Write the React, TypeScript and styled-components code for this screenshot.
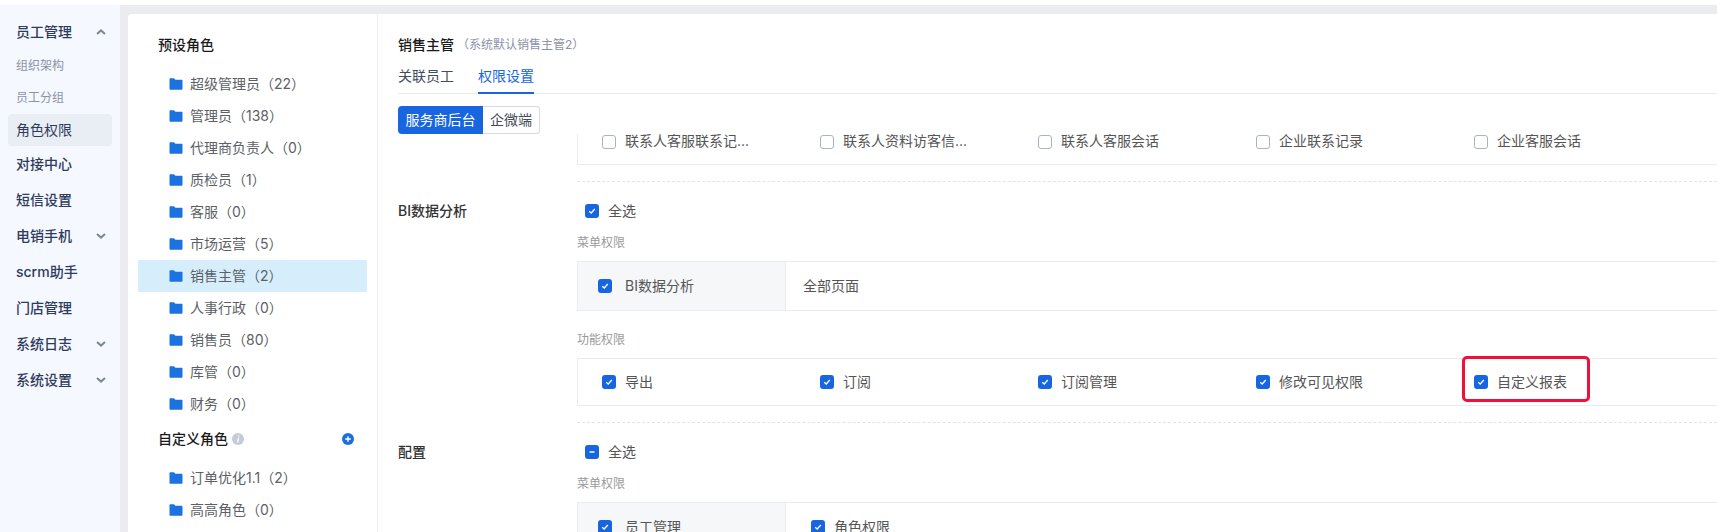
import React from 'react';
import styled, { createGlobalStyle } from 'styled-components';

const Global = createGlobalStyle`
  html, body { margin: 0; padding: 0; background: #fff; }
  body { font-family: Inter, "Noto Sans CJK SC", sans-serif; overflow: hidden; }
  * { box-sizing: border-box; }
`;

const Page = styled.div`
  height: 532px;
  width: 1717px;
  overflow: hidden;
  padding-top: 5px;
  background: #fff;
`;
const Shell = styled.div`
  display: flex;
  height: 527px;
  background: #ebecf0;
`;
const Label = styled.span`
  display: block;
  line-height: 20px;
  padding-bottom: 1px;
  white-space: nowrap;
`;
const Sidebar = styled.nav`
  width: 120px;
  flex: none;
  padding-top: 9px;
  background: #f5f8fe;
`;
const NavItem = styled.div<{ $active?: boolean }>`
  display: flex;
  align-items: center;
  justify-content: space-between;
  height: ${p => (p.$active ? '32px' : '36px')};
  margin: 0 8px;
  padding: 0 6px 0 8px;
  border-radius: 4px;
  font-size: 14px;
  font-weight: ${p => (p.$active ? 400 : 500)};
  color: #2f3b5c;
  background: ${p => (p.$active ? '#e9edf4' : 'transparent')};
`;
const SubItem = styled.div`
  height: 32px;
  margin: 0 8px;
  padding-left: 8px;
  display: flex;
  align-items: center;
  font-size: 12px;
  color: #8a93a8;
`;
const Card = styled.main`
  flex: 1;
  min-width: 0;
  display: flex;
  margin: 9px 0 0 8px;
  background: #fff;
  border-top-left-radius: 4px;
`;
const RolePanel = styled.aside`
  width: 250px;
  flex: none;
  padding: 21px 10px 0;
  border-right: 1px solid #eeeff2;
`;
const PanelTitle = styled.div`
  display: flex;
  align-items: center;
  height: 20px;
  padding-left: 20px;
  font-size: 14px;
  font-weight: 500;
  color: #1a1a1a;
`;
const CustomTitle = styled(PanelTitle)`
  margin-top: 9px;
  padding-right: 13px;
  > svg:first-of-type { margin-left: 4px; }
  > svg:last-of-type { margin-left: auto; }
`;
const RoleList = styled.div`
  margin-top: 13px;
`;
const RoleRow = styled.div<{ $selected?: boolean }>`
  display: flex;
  align-items: center;
  gap: 7px;
  height: 32px;
  padding-left: 31px;
  font-size: 14px;
  color: #5c5f66;
  background: ${p => (p.$selected ? '#d6eefc' : 'transparent')};
`;
const Detail = styled.section`
  flex: 1;
  min-width: 0;
  padding: 21px 0 0 20px;
`;
const Heading = styled.div`
  display: flex;
  align-items: center;
  gap: 3px;
  height: 20px;
  font-size: 14px;
  font-weight: 500;
  color: #1a1a1a;
`;
const HeadingNote = styled(Label)`
  font-size: 12px;
  font-weight: 400;
  color: #8a93a8;
`;
const Tabs = styled.div`
  display: flex;
  gap: 24px;
  margin-top: 5px;
  height: 34px;
  border-bottom: 1px solid #ebecf0;
`;
const Tab = styled.div<{ $active?: boolean }>`
  height: 34px;
  padding-top: 6px;
  line-height: 20px;
  font-size: 14px;
  color: ${p => (p.$active ? '#1766e0' : '#444b5c')};
  border-bottom: ${p => (p.$active ? '2px solid #1766e0' : 'none')};
`;
const Segments = styled.div`
  display: flex;
  margin-top: 12px;
  height: 28px;
`;
const Segment = styled.div<{ $active?: boolean }>`
  display: flex;
  align-items: center;
  justify-content: center;
  flex: none;
  width: ${p => (p.$active ? '85px' : '57px')};
  font-size: 14px;
  color: ${p => (p.$active ? '#fff' : '#444b5c')};
  background: ${p => (p.$active ? '#1766e0' : '#fff')};
  border: ${p => (p.$active ? 'none' : '1px solid #d5d9e3')};
  border-left: none;
  border-radius: ${p => (p.$active ? '4px 0 0 4px' : '0 4px 4px 0')};
`;
const Section = styled.div`
  display: grid;
  grid-template-columns: 179px 1fr;
`;
const SectionLabel = styled.div`
  padding-top: 19px;
  line-height: 20px;
  font-size: 14px;
  color: #333;
  font-weight: 500;
`;
const SectionBody = styled.div`
  padding-top: 19px;
  padding-bottom: 16px;
  border-bottom: 1px dashed #e1e4ea;
`;
const ClippedBody = styled.div`
  grid-column: 2;
  height: 48px;
  border-bottom: 1px dashed #e1e4ea;
`;
const SelectAll = styled.label`
  display: flex;
  align-items: center;
  gap: 9px;
  height: 20px;
  padding-left: 8px;
  font-size: 14px;
  color: #555;
`;
const GroupLabel = styled.div`
  margin: 11px 0 7px;
  line-height: 22px;
  font-size: 12px;
  color: #9a9a9a;
`;
const GroupGap = styled(GroupLabel)`
  margin-top: 18px;
`;
const MenuTable = styled.div`
  display: flex;
  height: 50px;
  border: 1px solid #ebecf0;
  border-right: none;
`;
const MenuHead = styled.label`
  display: flex;
  align-items: center;
  gap: 13px;
  width: 208px;
  flex: none;
  padding-left: 20px;
  font-size: 14px;
  color: #555;
  background: #f6f7f9;
  border-right: 1px solid #ebecf0;
`;
const MenuCell = styled.div`
  display: flex;
  align-items: center;
  padding-left: 17px;
  font-size: 14px;
  color: #555;
`;
const MenuOption = styled.label`
  display: flex;
  align-items: center;
  gap: 9px;
  margin-left: 8px;
`;
const OptionRow = styled.div<{ $clipped?: boolean }>`
  display: flex;
  align-items: ${p => (p.$clipped ? 'flex-start' : 'center')};
  height: ${p => (p.$clipped ? '31px' : '48px')};
  padding-left: 24px;
  border: 1px solid #ebecf0;
  border-right: none;
  border-top: ${p => (p.$clipped ? 'none' : '1px solid #ebecf0')};
`;
const Option = styled.label<{ $clipped?: boolean }>`
  position: relative;
  display: flex;
  align-items: center;
  gap: 9px;
  width: 218px;
  height: ${p => (p.$clipped ? '15px' : '20px')};
  font-size: 14px;
  color: #555;
`;
const Highlight = styled.div`
  position: absolute;
  left: -12px;
  top: -16px;
  width: 128px;
  height: 46px;
  border: 3px solid #f0103a;
  border-radius: 5px;
`;
const Box = styled.span<{ $on?: boolean }>`
  display: inline-flex;
  align-items: center;
  justify-content: center;
  width: 14px;
  height: 14px;
  flex: none;
  border-radius: 3px;
  background: ${p => (p.$on ? '#1766e0' : '#fff')};
  border: ${p => (p.$on ? 'none' : '1px solid #a9b2c6')};
`;

const Check = ({ state }: { state?: 'on' | 'mixed' }) => (
  <Box $on={!!state}>
    {state === 'on' && (
      <svg width="10" height="10" viewBox="0 0 10 10" fill="none">
        <path d="M2.2 5.2 4.2 7l3.6-4" stroke="#fff" strokeWidth="1.3" />
      </svg>
    )}
    {state === 'mixed' && (
      <svg width="10" height="10" viewBox="0 0 10 10" fill="none">
        <path d="M2.5 5h5" stroke="#fff" strokeWidth="1.5" />
      </svg>
    )}
  </Box>
);

const Chevron = ({ up }: { up?: boolean }) => (
  <svg width="10" height="6" viewBox="0 0 10 6" fill="none">
    <path d={up ? 'M1 5l4-3.6L9 5' : 'M1 1l4 3.6L9 1'} stroke="#7d879c" strokeWidth="2" />
  </svg>
);

const Folder = () => (
  <svg width="14" height="12" viewBox="0 0 14 12" style={{ flex: 'none' }}>
    <path d="M.5 1.2C.5.6 1 .2 1.500.2h3.400l1.500 1.600h6.100c.6 0 1 .4 1 1v7.900c0 .6-.4 1-1 1h-11c-.6 0-1-.4-1-1z" fill="#1a73e0" />
  </svg>
);

const Info = () => (
  <svg width="12" height="12" viewBox="0 0 12 12">
    <circle cx="6" cy="6" r="6" fill="#c5cbd8" />
    <path d="M6.400 2.400h1.300l-.3 1.200H6.100zM5.900 4.700h1.300l-.9 4.800H5z" fill="#fff" />
  </svg>
);

const Plus = () => (
  <svg width="12" height="12" viewBox="0 0 12 12">
    <circle cx="6" cy="6" r="6" fill="#1a6fe0" />
    <path d="M6 3.200v5.600M3.200 6h5.600" stroke="#fff" strokeWidth="1.400" />
  </svg>
);

const presets = ['超级管理员（22）', '管理员（138）', '代理商负责人（0）', '质检员（1）', '客服（0）', '市场运营（5）', '销售主管（2）', '人事行政（0）', '销售员（80）', '库管（0）', '财务（0）'];
const customs = ['订单优化1.1（2）', '高高角色（0）'];
const topOptions = ['联系人客服联系记...', '联系人资料访客信...', '联系人客服会话', '企业联系记录', '企业客服会话'];
const biOptions = ['导出', '订阅', '订阅管理', '修改可见权限', '自定义报表'];

export default function App() {
  return (
    <Page>
      <Global />
      <Shell>
        <Sidebar>
          <NavItem><Label>员工管理</Label><Chevron up /></NavItem>
          <SubItem><Label>组织架构</Label></SubItem>
          <SubItem><Label>员工分组</Label></SubItem>
          <NavItem $active><Label>角色权限</Label></NavItem>
          <NavItem><Label>对接中心</Label></NavItem>
          <NavItem><Label>短信设置</Label></NavItem>
          <NavItem><Label>电销手机</Label><Chevron /></NavItem>
          <NavItem><Label>scrm助手</Label></NavItem>
          <NavItem><Label>门店管理</Label></NavItem>
          <NavItem><Label>系统日志</Label><Chevron /></NavItem>
          <NavItem><Label>系统设置</Label><Chevron /></NavItem>
        </Sidebar>
        <Card>
          <RolePanel>
            <PanelTitle><Label>预设角色</Label></PanelTitle>
            <RoleList>
              {presets.map(r => (
                <RoleRow key={r} $selected={r.startsWith('销售主管')}><Folder /><Label>{r}</Label></RoleRow>
              ))}
            </RoleList>
            <CustomTitle><Label>自定义角色</Label><Info /><Plus /></CustomTitle>
            <RoleList>
              {customs.map(r => (
                <RoleRow key={r}><Folder /><Label>{r}</Label></RoleRow>
              ))}
            </RoleList>
          </RolePanel>
          <Detail>
            <Heading><Label>销售主管</Label><HeadingNote>（系统默认销售主管2）</HeadingNote></Heading>
            <Tabs>
              <Tab>关联员工</Tab>
              <Tab $active>权限设置</Tab>
            </Tabs>
            <Segments>
              <Segment $active><Label>服务商后台</Label></Segment>
              <Segment><Label>企微端</Label></Segment>
            </Segments>
            <Section>
              <ClippedBody>
                <OptionRow $clipped>
                  {topOptions.map(o => (
                    <Option key={o} $clipped><Check /><Label>{o}</Label></Option>
                  ))}
                </OptionRow>
              </ClippedBody>
            </Section>
            <Section>
              <SectionLabel>BI数据分析</SectionLabel>
              <SectionBody>
                <SelectAll><Check state="on" /><Label>全选</Label></SelectAll>
                <GroupLabel>菜单权限</GroupLabel>
                <MenuTable>
                  <MenuHead><Check state="on" /><Label>BI数据分析</Label></MenuHead>
                  <MenuCell><Label>全部页面</Label></MenuCell>
                </MenuTable>
                <GroupGap>功能权限</GroupGap>
                <OptionRow>
                  {biOptions.map((o, i) => (
                    <Option key={o}>
                      <Check state="on" /><Label>{o}</Label>
                      {i === 4 && <Highlight />}
                    </Option>
                  ))}
                </OptionRow>
              </SectionBody>
            </Section>
            <Section>
              <SectionLabel>配置</SectionLabel>
              <SectionBody>
                <SelectAll><Check state="mixed" /><Label>全选</Label></SelectAll>
                <GroupLabel>菜单权限</GroupLabel>
                <MenuTable>
                  <MenuHead><Check state="on" /><Label>员工管理</Label></MenuHead>
                  <MenuCell>
                    <MenuOption><Check state="on" /><Label>角色权限</Label></MenuOption>
                  </MenuCell>
                </MenuTable>
              </SectionBody>
            </Section>
          </Detail>
        </Card>
      </Shell>
    </Page>
  );
}
